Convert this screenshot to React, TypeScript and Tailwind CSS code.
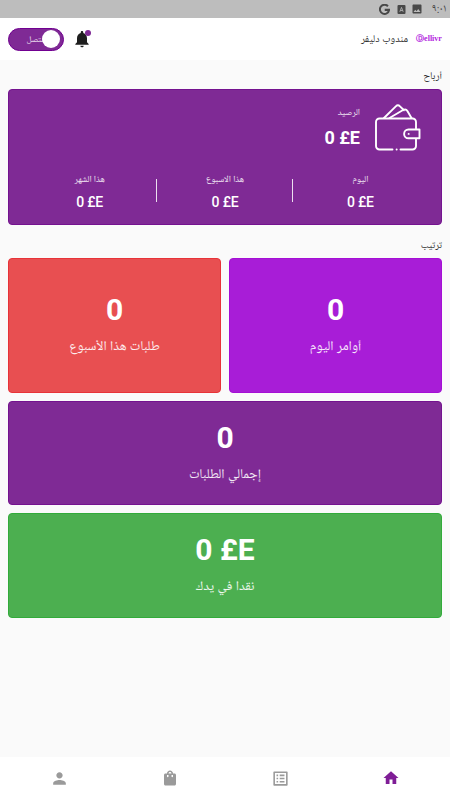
import type { ReactNode } from 'react';
import {
    MdHome,
    MdImage,
    MdListAlt,
    MdNotifications,
    MdPerson,
    MdShoppingBag,
} from 'react-icons/md';

type StatCardProps = {
    value: string;
    label: string;
    className: string;
};

const earnings = [
    { label: 'اليوم', value: '0 £E' },
    { label: 'هذا الاسبوع', value: '0 £E' },
    { label: 'هذا الشهر', value: '0 £E' },
];

const Amount = ({
    children,
    className,
}: {
    children: ReactNode;
    className: string;
}) => (
    <span dir="ltr" className={`font-['Roboto',sans-serif] ${className}`}>
        {children}
    </span>
);

const StatCard = ({ value, label, className }: StatCardProps) => (
    <div
        className={`flex flex-col items-center justify-center rounded border text-white ${className}`}
    >
        <Amount className="text-[30px] leading-9 font-bold">{value}</Amount>
        <span className="mt-[7px] text-[13.5px] leading-6 text-white/90">
            {label}
        </span>
    </div>
);

const StatusBar = () => (
    <div
        dir="ltr"
        className="flex h-[18px] shrink-0 items-center justify-end bg-[#bdbdbd] pr-[4px] text-[#484848]"
    >
        <svg viewBox="0 0 24 24" className="h-[11px] w-[11px]" fill="none">
            <path
                d="M19.5 5A10 10 0 1 0 22 12.8H12.5"
                stroke="currentColor"
                strokeWidth="4.4"
            />
        </svg>
        <svg viewBox="0 0 9 9" className="ml-[7px] h-[9px] w-[9px]">
            <rect x="0.5" width="8" height="9" rx="1" fill="currentColor" />
            <path
                d="M2.8 6.8 4.5 2.4 6.2 6.8M3.4 5.5H5.6"
                stroke="#bdbdbd"
                strokeWidth="0.8"
                fill="none"
            />
        </svg>
        <MdImage className="ml-[5px]" size={12} />
        <span className="ml-[9px] w-[14px] pt-px text-center text-[11px] leading-none whitespace-nowrap">
            ٩:٠١
        </span>
    </div>
);

const Header = () => (
    <header className="flex h-[42px] shrink-0 items-center bg-white px-2">
        <span
            dir="ltr"
            className="w-[26px] text-center font-['Liberation_Serif',serif] text-[8px] leading-none font-bold whitespace-nowrap text-[#b31fe0]"
        >
            Ⓓellivr
        </span>
        <h1 className="mr-2 pt-[2px] text-[10.5px] leading-none text-[#303030]">
            مندوب دليفر
        </h1>
        <div className="relative mr-auto ml-2">
            <MdNotifications size={20} className="text-[#1e1e1e]" />
            <span className="absolute top-px right-px h-[6px] w-[6px] rounded-full bg-[#7f2a95]" />
        </div>
        <button
            dir="ltr"
            className="flex h-[23px] w-14 items-center justify-end rounded-full border border-[#710091] bg-[#7f2a95] pr-[3px]"
        >
            <span className="-mr-[3px] pt-[2px] text-[8.5px] leading-none text-white/85">
                متصل
            </span>
            <span className="z-10 h-[18px] w-[18px] rounded-full bg-white" />
        </button>
    </header>
);

const WalletIcon = () => (
    <svg
        viewBox="0 0 46 48"
        className="h-12 w-[46px]"
        fill="none"
        stroke="white"
        strokeWidth="1.9"
        strokeLinecap="round"
        strokeLinejoin="round"
    >
        <path d="M17.5 45.5H4.5A3.5 3.5 0 0 1 1 42V18A3.5 3.5 0 0 1 4.5 14.5H37.5A3.5 3.5 0 0 1 41 18V24.5M41 35.5V42A3.5 3.5 0 0 1 37.5 45.5H25.5" />
        <path d="M9 14 20.8 2.4A3 3 0 0 1 25 2.4L29 6.3M14.5 14 28.5 5.8A3 3 0 0 1 32.4 7L36.5 14" />
        <path d="M44.5 25.5H33.5A4.4 4.4 0 0 0 33.5 34.3H44.5Z" />
        <path d="M33.6 29.9H33.7M21.6 45.5H21.7" />
    </svg>
);

const BalanceCard = () => (
    <section className="h-[136px] rounded border border-[#74128f] bg-[#7f2a95] text-white">
        <div className="flex h-[78px] items-start pt-[13.5px] pr-[20px]">
            <WalletIcon />
            <div className="mr-[15px] flex flex-col">
                <span className="pt-px text-[9px] leading-4 text-white/90">
                    الرصيد
                </span>
                <Amount className="mt-[5px] text-[18px] leading-6 font-bold">
                    0 £E
                </Amount>
            </div>
        </div>
        <div className="grid grid-cols-3 px-[13px]">
            {earnings.map((item, index) => (
                <div key={item.label} className="relative flex flex-col items-center">
                    <span className="mt-[4px] text-[9px] leading-4 text-white/90">
                        {item.label}
                    </span>
                    <Amount className="mt-[6px] text-[14px] leading-4 font-medium tracking-[-0.2px]">
                        {item.value}
                    </Amount>
                    {index > 0 && (
                        <span className="absolute top-[11px] right-0 h-[23px] w-px bg-white/85" />
                    )}
                </div>
            ))}
        </div>
    </section>
);

const BottomNav = () => (
    <nav className="grid h-[43px] shrink-0 grid-cols-4 place-items-center bg-white px-1 pb-px text-[#9a9a9a]">
        <MdHome size={18} className="text-[#7f1d96]" />
        <MdListAlt size={19} />
        <MdShoppingBag size={18} />
        <MdPerson size={19} />
    </nav>
);

const App = () => {
    return (
        <div
            dir="rtl"
            className="flex h-[800px] w-[450px] flex-col overflow-hidden bg-[#fafafa] font-['Roboto','Noto_Naskh_Arabic_UI','Noto_Naskh_Arabic','DejaVu_Sans',sans-serif]"
        >
            <StatusBar />
            <Header />
            <main className="flex-1 px-2">
                <h2 className="flex h-[29px] items-center pt-[5px] text-[10.5px] text-[#303030]">
                    أرباح
                </h2>
                <BalanceCard />
                <h2 className="flex h-[33px] items-center pt-[7px] text-[10px] text-[#303030]">
                    ترتيب
                </h2>
                <div className="grid grid-cols-2 gap-2">
                    <StatCard
                        value="0"
                        label="أوامر اليوم"
                        className="h-[135px] border-[#a50fd5] bg-[#a81dd7]"
                    />
                    <StatCard
                        value="0"
                        label="طلبات هذا الأسبوع"
                        className="h-[135px] border-[#e83338] bg-[#e84f51]"
                    />
                    <StatCard
                        value="0"
                        label="إجمالي الطلبات"
                        className="col-span-2 h-[104px] border-[#74128f] bg-[#7f2a95]"
                    />
                    <StatCard
                        value="0 £E"
                        label="نقدا في يدك"
                        className="col-span-2 h-[105px] border-[#32ab3a] bg-[#4caf50]"
                    />
                </div>
            </main>
            <BottomNav />
        </div>
    );
};

export default App;
